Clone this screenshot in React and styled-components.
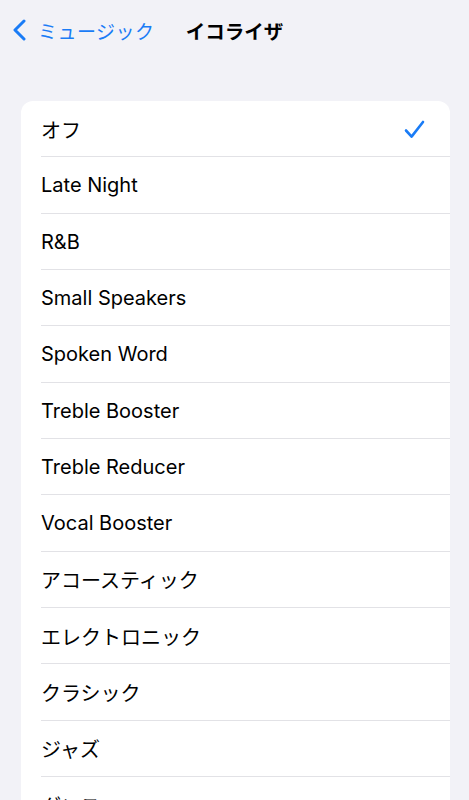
import React from 'react'
import styled, { createGlobalStyle } from 'styled-components'

const GlobalStyle = createGlobalStyle`
  body {
    margin: 0;
    background: #f2f2f7;
    font-family: "Inter", "Noto Sans CJK JP", sans-serif;
    -webkit-font-smoothing: antialiased;
  }
`

const presets = [
  'オフ',
  'Late Night',
  'R&B',
  'Small Speakers',
  'Spoken Word',
  'Treble Booster',
  'Treble Reducer',
  'Vocal Booster',
  'アコースティック',
  'エレクトロニック',
  'クラシック',
  'ジャズ',
  'ダンス',
  'ディープ',
  'ピアノ',
]

const Page = styled.div`
  min-height: 100vh;
  background: #f2f2f7;
`

const NavBar = styled.div`
  display: grid;
  grid-template-columns: 1fr auto 1fr;
  align-items: center;
  height: 60px;
`

const Back = styled.div`
  display: flex;
  align-items: center;
  gap: 12px;
  padding-left: 12px;
  color: #1a7cf6;
  font-size: 19px;
  letter-spacing: 0.5px;
`

const Title = styled.div`
  font-size: 19.5px;
  font-weight: 700;
  color: #000;
`

const Card = styled.div`
  margin: 41px 19px 0 21px;
  background: #fff;
  border-radius: 12px;
  overflow: hidden;
`

const Row = styled.div`
  padding-left: 20px;
`

const RowInner = styled.div`
  display: flex;
  align-items: center;
  justify-content: space-between;
  height: 56.33px;
  box-sizing: border-box;
  padding: 1px 25px 0 0;
  border-bottom: ${(p) => (p.last ? 'none' : '1px solid #e2e2e6')};
  font-size: 20px;
  color: #000;
`

const Check = () => (
  <svg width="21" height="19" viewBox="0 0 21 19">
    <path
      d="M2 10.5 L7.6 16.6 L19 2"
      fill="none"
      stroke="#1a7cf6"
      strokeWidth="2.6"
      strokeLinecap="round"
      strokeLinejoin="round"
    />
  </svg>
)

const Chevron = () => (
  <svg width="14" height="22" viewBox="0 0 14 22">
    <path
      d="M12 2 L3 11 L12 20"
      fill="none"
      stroke="#1a7cf6"
      strokeWidth="3"
      strokeLinecap="round"
      strokeLinejoin="round"
    />
  </svg>
)

export default function App() {
  return (
    <Page>
      <GlobalStyle />
      <NavBar>
        <Back>
          <Chevron />
          <span>ミュージック</span>
        </Back>
        <Title>イコライザ</Title>
        <div />
      </NavBar>
      <Card>
        {presets.map((name, i) => (
          <Row key={name}>
            <RowInner last={i === presets.length - 1}>
              <span>{name}</span>
              {i === 0 && <Check />}
            </RowInner>
          </Row>
        ))}
      </Card>
    </Page>
  )
}
